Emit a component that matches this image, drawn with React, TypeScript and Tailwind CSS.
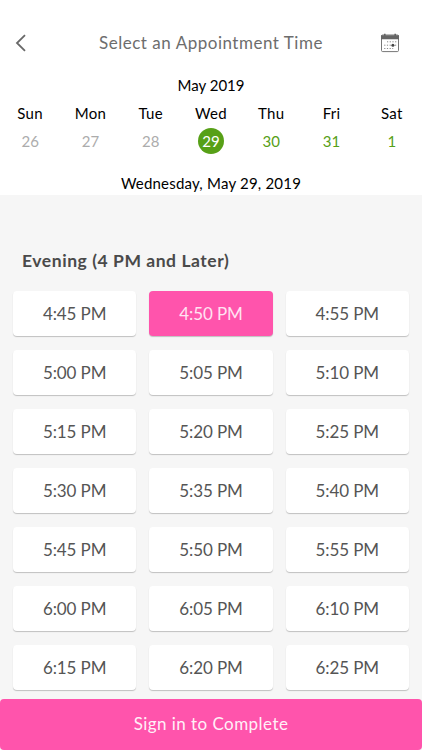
import React, { useState } from 'react';

const days = [
  { name: 'Sun', date: 26, open: false },
  { name: 'Mon', date: 27, open: false },
  { name: 'Tue', date: 28, open: false },
  { name: 'Wed', date: 29, open: true },
  { name: 'Thu', date: 30, open: true },
  { name: 'Fri', date: 31, open: true },
  { name: 'Sat', date: 1, open: true },
];

const times = [
  '4:45 PM', '4:50 PM', '4:55 PM',
  '5:00 PM', '5:05 PM', '5:10 PM',
  '5:15 PM', '5:20 PM', '5:25 PM',
  '5:30 PM', '5:35 PM', '5:40 PM',
  '5:45 PM', '5:50 PM', '5:55 PM',
  '6:00 PM', '6:05 PM', '6:10 PM',
  '6:15 PM', '6:20 PM', '6:25 PM',
];

const BackIcon: React.FC = () => (
  <svg width="12" height="18" viewBox="0 0 12 18" fill="none" stroke="#686868" strokeWidth="1.8">
    <path d="M10 1.2L2 9l8 7.8" />
  </svg>
);

const CalendarIcon: React.FC = () => (
  <svg width="20" height="20" viewBox="0 0 20 20" fill="none">
    <rect x="1.5" y="2" width="17" height="16.6" rx="1.2" stroke="#777" strokeWidth="1" />
    <path d="M1 2.2h18v4H1zM4 .7h1.6v2H4zM14.4 .7H16v2h-1.6z" fill="#666" />
    <path d="M7 8.8h10" stroke="#888" strokeWidth="1" strokeDasharray="1.2 1.5" />
    <path d="M4.2 12.2h12.6M4.2 15.5h9" stroke="#888" strokeWidth="1" strokeDasharray="1.2 1.5" />
    <circle cx="12.9" cy="12.2" r="1.5" fill="#444" />
  </svg>
);

const App: React.FC = () => {
  const [date, setDate] = useState(29);
  const [time, setTime] = useState('4:50 PM');

  return (
    <div className="flex flex-col h-[750px] w-full overflow-hidden bg-[#f6f6f6] font-['Lato',sans-serif]">
      <div className="h-[195px] shrink-0 bg-white text-black">
        <div className="grid grid-cols-[48px_1fr_48px] items-center pt-[33px]">
          <button aria-label="Back" className="pl-[15px]"><BackIcon /></button>
          <h1 className="text-center text-[17px] leading-5 tracking-[0.52px] text-[#6d6d6d]">Select an Appointment Time</h1>
          <button aria-label="Calendar" className="pl-[6px]"><CalendarIcon /></button>
        </div>

        <div className="mt-[22px] text-center text-[15px] leading-5">May 2019</div>

        <div className="mt-2 grid grid-cols-7">
          {days.map((day) => (
            <div key={day.name} className="flex flex-col items-center">
              <span className="text-[15px] leading-5 tracking-[0.3px]">{day.name}</span>
              <button
                onClick={() => setDate(day.date)}
                disabled={!day.open}
                className={`mt-[5px] size-[26px] rounded-full text-[15px] leading-[26px] ${
                  day.date === date ? 'bg-[#57a017] text-white' : day.open ? 'text-[#57a017]' : 'text-[#acacac]'
                }`}
              >
                {day.date}
              </button>
            </div>
          ))}
        </div>

        <div className="mt-[19px] text-center text-[15px] leading-5 tracking-[0.2px]">Wednesday, May 29, 2019</div>
      </div>

      <div className="h-[504px] shrink-0 overflow-hidden px-[13px] pt-[55px]">
        <h2 className="pl-[9px] text-[17.5px] leading-[22px] font-bold tracking-[0.55px] text-[#4a4a4a]">
          Evening (4 PM and Later)
        </h2>
        <div className="mt-[19px] grid grid-cols-3 gap-x-[13px] gap-y-[14px]">
          {times.map((slot) => (
            <button
              key={slot}
              onClick={() => setTime(slot)}
              className={`h-[45px] rounded text-[17px] tracking-[-0.1px] shadow-[0_1px_1px_rgba(0,0,0,0.22)] ${
                slot === time ? 'bg-[#ff54ac] text-[#ffe3f2]' : 'bg-white text-[#555]'
              }`}
            >
              {slot}
            </button>
          ))}
        </div>
      </div>

      <button className="h-[51px] shrink-0 rounded bg-[#ff54ac] pb-0.5 text-[17px] tracking-[0.45px] text-[#fff0f8]">
        Sign in to Complete
      </button>
    </div>
  );
};

export default App;
